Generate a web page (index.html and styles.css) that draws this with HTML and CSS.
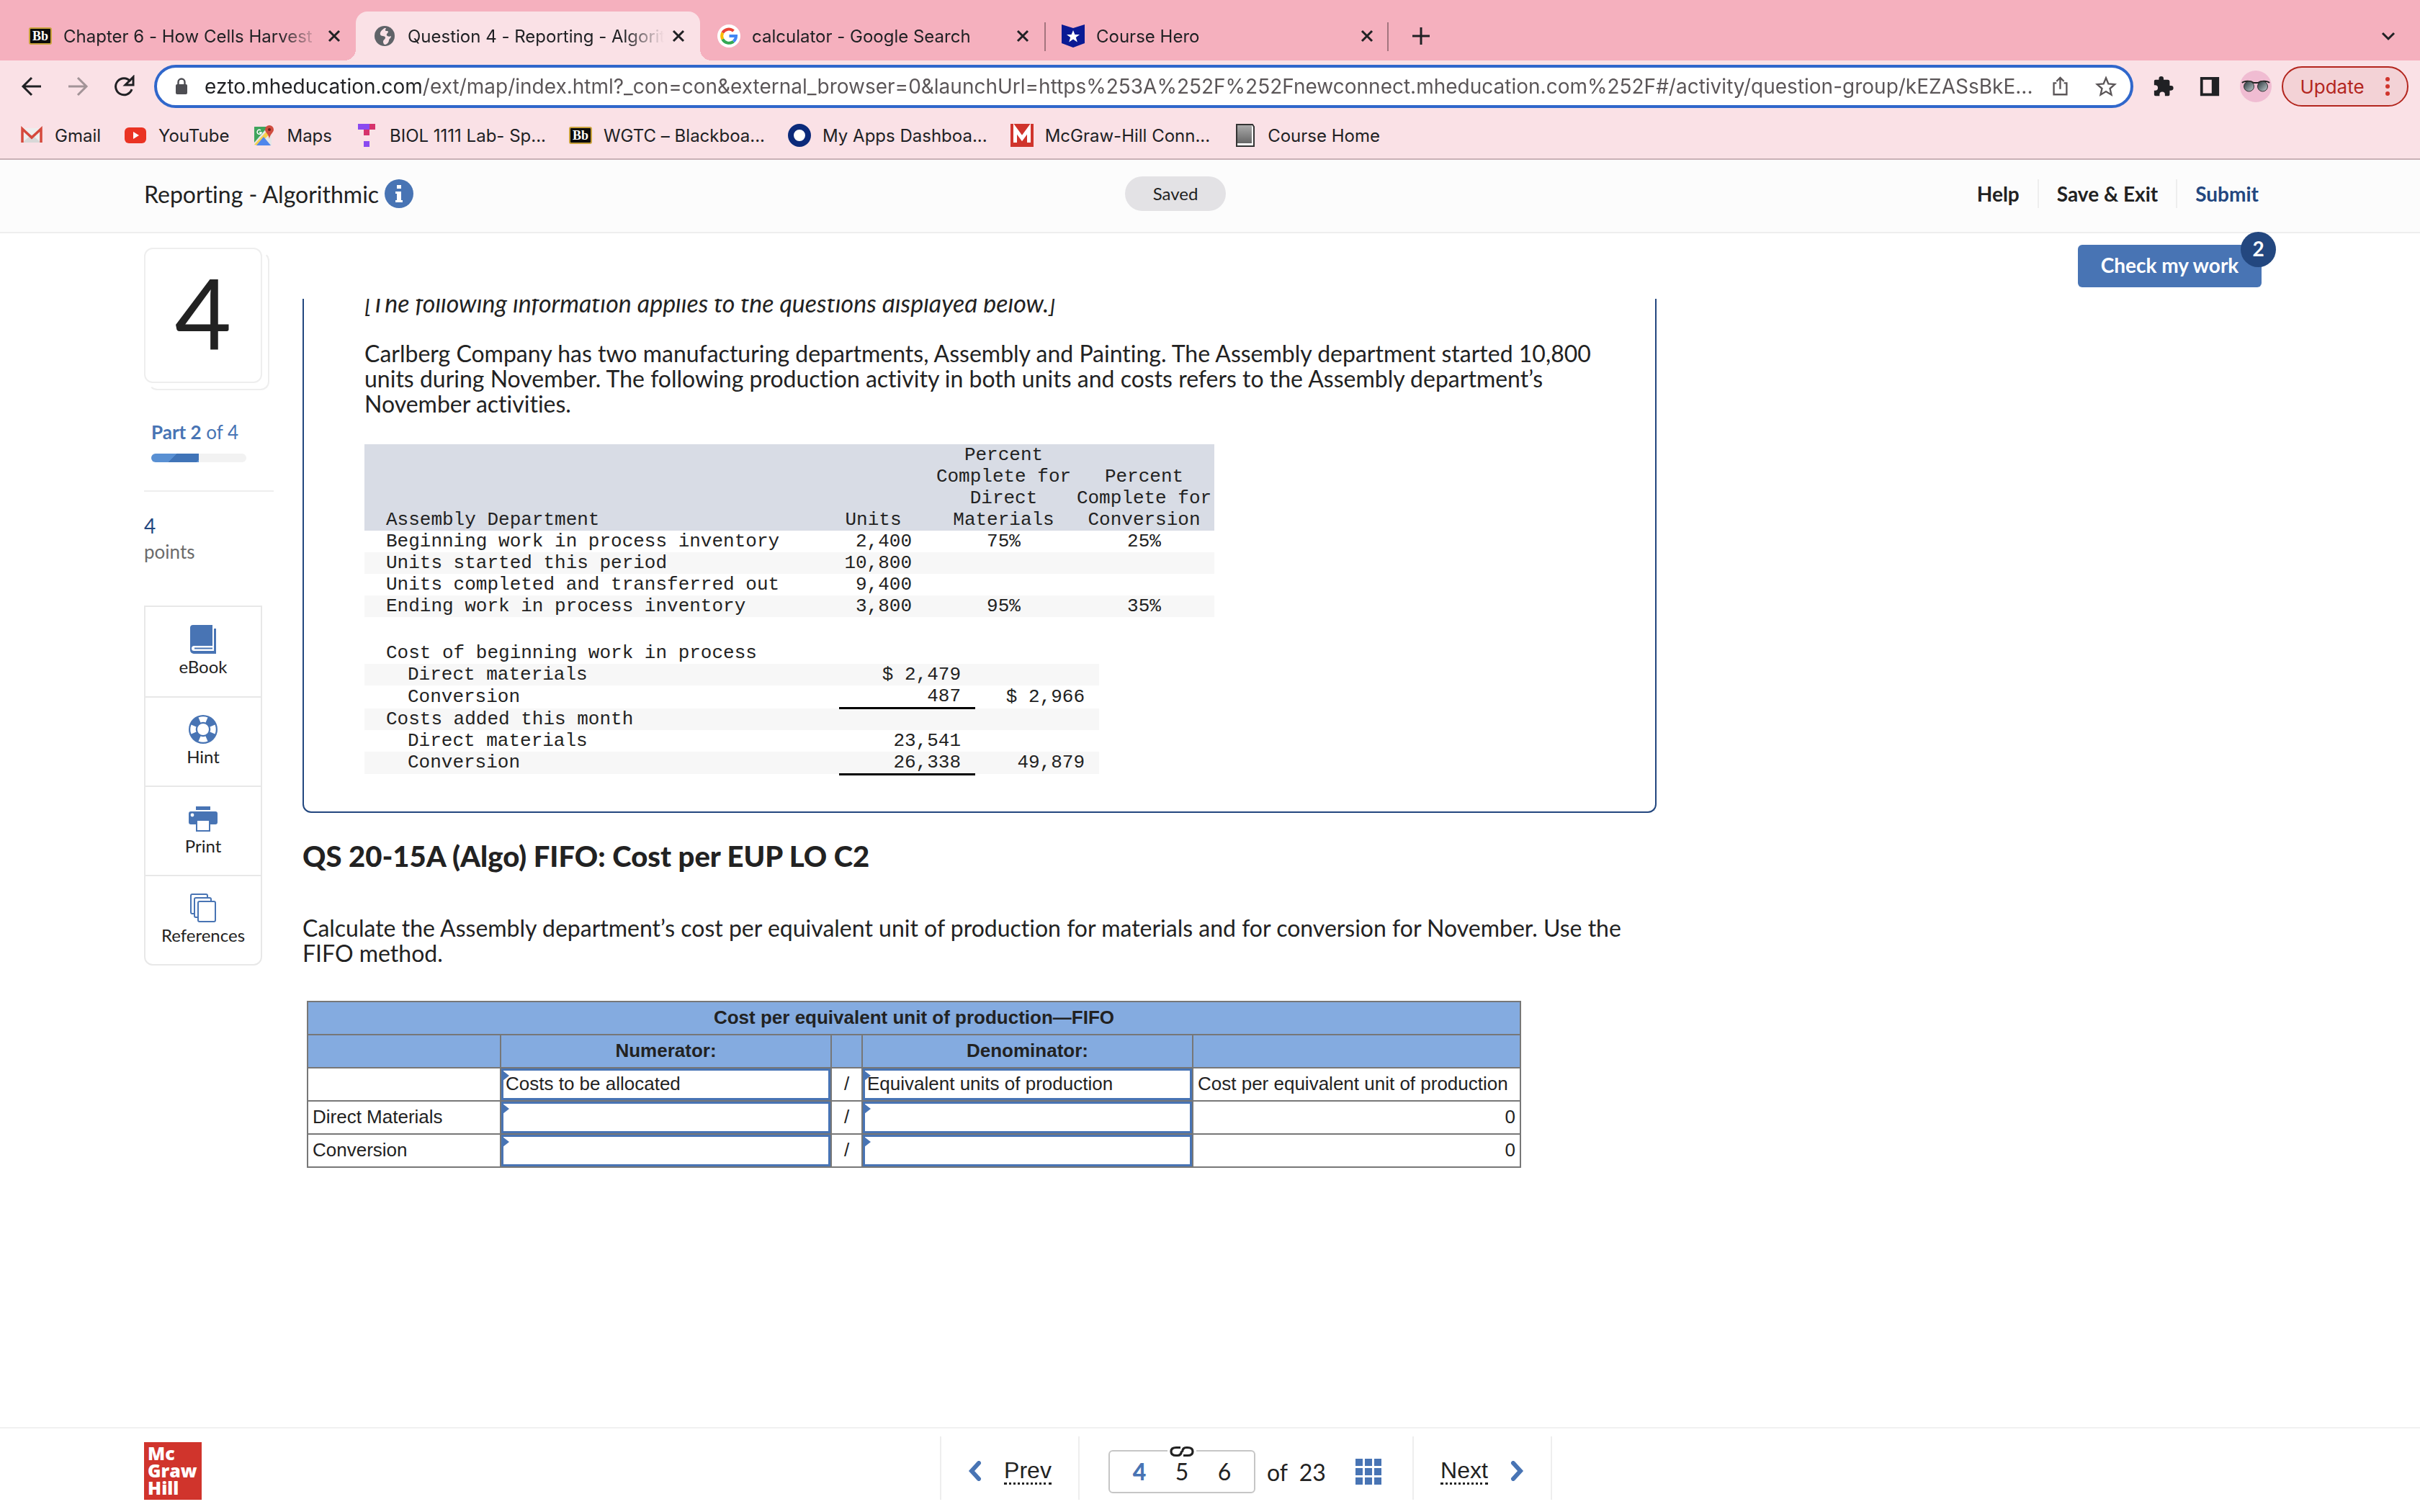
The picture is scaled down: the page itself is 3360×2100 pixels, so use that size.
FILE: index.html
```html
<!DOCTYPE html>
<html lang="en">

<head>
	<meta charset="utf-8">
	<title>Question 4 - Reporting - Algorithmic - Connect</title>
	<link rel="stylesheet" href="styles.css">
</head>

<body>
	<div class="browser">
		<div class="tabs">
			<div class="tab">
				<svg class="fav" viewBox="0 0 32 32"><rect x="1" y="5" width="30" height="22" rx="2" fill="#0b0b0b" stroke="#c9a23c" stroke-width="2"/><text x="16" y="22" class="bb">Bb</text></svg>
				<span class="tab-title">Chapter 6 - How Cells Harvest</span>
				<button class="close" aria-label="Close tab"><svg viewBox="0 0 20 20"><path d="M3 3l14 14M17 3L3 17"/></svg></button>
			</div>
			<div class="tab active">
				<svg class="fav" viewBox="0 0 32 32"><circle cx="16" cy="16" r="14" fill="#5f6368"/><path d="M16 5c-3 2-7 5-6 9 1 3 6 1 7 4 0 3-3 3-3 6 0 2 1 4 3 4 3-1 5-4 5-6s3-3 3-6c-2 1-5 1-6-1s2-3 2-5-4 0-4-2 1-2 1-3z" fill="#fae1e6"/><path d="M20 5c1 3 3 4 5 7" stroke="#5f6368" stroke-width="3" fill="none"/></svg>
				<span class="tab-title">Question 4 - Reporting - Algorit</span>
				<button class="close" aria-label="Close tab"><svg viewBox="0 0 20 20"><path d="M3 3l14 14M17 3L3 17"/></svg></button>
			</div>
			<div class="tab">
				<svg class="fav" viewBox="0 0 32 32"><circle cx="16" cy="16" r="16" fill="#fff"/><g fill="none" stroke-width="4"><path d="M22.500 9A10 10 0 0 0 7.300 11.500" stroke="#ea4335"/><path d="M7.300 11.500A10 10 0 0 0 7.300 20.500" stroke="#fbbc05"/><path d="M7.300 20.500A10 10 0 0 0 22.400 23.600" stroke="#34a853"/><path d="M22.400 23.600A10 10 0 0 0 26 16H16.500" stroke="#4285f4"/></g></svg>
				<span class="tab-title">calculator - Google Search</span>
				<button class="close" aria-label="Close tab"><svg viewBox="0 0 20 20"><path d="M3 3l14 14M17 3L3 17"/></svg></button>
			</div>
			<div class="tab line">
				<svg class="fav" viewBox="0 0 32 32"><path d="M0 0l16 5 16-5v26l-16 6-16-6z" fill="#0a1a94"/><path d="M16 8l2.400 6h6.600l-5.200 4 2 6.500-5.800-4-5.800 4 2-6.500-5.200-4h6.600z" fill="#fff"/></svg>
				<span class="tab-title">Course Hero</span>
				<button class="close" aria-label="Close tab"><svg viewBox="0 0 20 20"><path d="M3 3l14 14M17 3L3 17"/></svg></button>
			</div>
			<button class="new-tab" aria-label="New tab"><svg viewBox="0 0 24 24"><path d="M12 0v24M0 12h24"/></svg></button>
			<button class="tab-search" aria-label="Search tabs"><svg viewBox="0 0 20 20"><path d="M2 6l8 8 8-8"/></svg></button>
		</div>

		<div class="toolbar">
			<button class="nav-btn" aria-label="Back"><svg viewBox="0 0 32 32"><path d="M29 16H4M16 4L4 16l12 12"/></svg></button>
			<button class="nav-btn off" aria-label="Forward"><svg viewBox="0 0 32 32"><path d="M3 16h25M16 4l12 12-12 12"/></svg></button>
			<button class="nav-btn" aria-label="Reload"><svg viewBox="0 0 32 32"><path d="M27 20a11.500 11.500 0 1 1-2-11"/><path d="M29 3v11H18z" fill="#202124" stroke="none"/></svg></button>
			<div class="omnibox">
				<svg class="lock" viewBox="0 0 20 24"><rect x="2" y="9" width="16" height="14" rx="2" fill="#4d4d52"/><path d="M5.500 10V6a4.500 4.500 0 0 1 9 0v4" fill="none" stroke="#4d4d52" stroke-width="2.400"/></svg>
				<input class="url" type="text" aria-label="Address" value="ezto.mheducation.com/ext/map/index.html?_con=con&amp;external_browser=0&amp;launchUrl=https%253A%252F%252Fnewconnect.mheducation.com%252F#/activity/question-group/kEZASsBkE...">
				<button class="omni-btn" aria-label="Share"><svg viewBox="0 0 32 32"><path d="M11 11H7v17h19V11h-4M16.500 20V3M11 8.500L16.500 3 22 8.500"/></svg></button>
				<button class="omni-btn" aria-label="Bookmark"><svg viewBox="0 0 32 32"><path d="M16 3.500l3.600 8.700 9.400.8-7.100 6.200 2.100 9.200-8-4.900-8 4.900 2.100-9.200L3 13l9.400-.8z"/></svg></button>
			</div>
			<button class="ext-btn" aria-label="Extensions"><svg viewBox="0 0 32 32"><path d="M27 15h-2V9a3 3 0 0 0-3-3h-6V4.500a3.500 3.500 0 0 0-7 0V6H4a2 2 0 0 0-2 2v6h1.500a4 4 0 0 1 0 8H2v6a2 2 0 0 0 2 2h6v-2a4 4 0 0 1 8 0v2h5a2 2 0 0 0 2-2v-6h2a3.500 3.500 0 0 0 0-7z" fill="#202124"/></svg></button>
			<button class="ext-btn" aria-label="Side panel"><svg viewBox="0 0 32 32"><path d="M2 2h28v28H2zM6 6v20h13V6z" fill="#202124" fill-rule="evenodd"/></svg></button>
			<button class="avatar" aria-label="Profile"><svg viewBox="0 0 44 44"><defs><linearGradient id="lens" x2="1" y2="1"><stop offset="0" stop-color="#263238"/><stop offset="1" stop-color="#c4cfd2"/></linearGradient></defs><circle cx="22" cy="22" r="22" fill="#f0bcd2"/><path d="M3 17c3-3 12-3 16 0h6c4-3 13-3 16 0" fill="none" stroke="#222" stroke-width="2"/><circle cx="12.500" cy="22" r="7" fill="url(#lens)" stroke="#333"/><circle cx="31.500" cy="22" r="7" fill="url(#lens)" stroke="#333"/></svg></button>
			<button class="update">Update<svg viewBox="0 0 8 28"><circle cx="4" cy="4" r="3"/><circle cx="4" cy="14" r="3"/><circle cx="4" cy="24" r="3"/></svg></button>
		</div>

		<nav class="bookmarks">
			<a href="#"><svg viewBox="0 0 32 32"><path d="M3 6h26v20H3z" fill="#eee"/><path d="M3 26l13-11 13 11z" fill="#d8d8d8"/><path d="M3 26V7l13 12L29 7v19" fill="none" stroke="#d5493c" stroke-width="3.500"/></svg>Gmail</a>
			<a href="#"><svg viewBox="0 0 32 32"><rect x="1" y="5" width="30" height="22" rx="6" fill="#ea3323"/><path d="M13 11l8 5-8 5z" fill="#fff"/></svg>YouTube</a>
			<a href="#"><svg viewBox="0 0 32 32"><path d="M3 4h24v26H3z" fill="#e6e6e6"/><path d="M3 4h19L3 26z" fill="#3fa45c"/><path d="M3 29L24 6l4 5L8 30z" fill="#f7cf4d"/><path d="M6 30l10-12 10 12z" fill="#4f86ec"/><path d="M24 2a6 6 0 0 0-6 6c0 4 5 6 6 13 1-7 6-9 6-13a6 6 0 0 0-6-6z" fill="#d04c3f"/><circle cx="24" cy="8" r="2" fill="#6f1f19"/><path d="M12 9a3 3 0 1 0 1 3h-3" fill="none" stroke="#fff" stroke-width="1.500"/></svg>Maps</a>
			<a href="#"><svg viewBox="0 0 32 32"><path d="M4 0h17v8H4zM12 24h8v8h-8z" fill="#8a4af0"/><path d="M20 0h8v8h-8zM12 8h8v8h-8z" fill="#d6336c"/></svg>BIOL 1111 Lab- Sp...</a>
			<a href="#"><svg viewBox="0 0 32 32"><rect x="1" y="5" width="30" height="22" rx="2" fill="#0b0b0b" stroke="#c9a23c" stroke-width="2"/><text x="16" y="22" class="bb">Bb</text></svg>WGTC – Blackboa...</a>
			<a href="#"><svg viewBox="0 0 32 32"><circle cx="16" cy="16" r="12" fill="#fff" stroke="#0b2a7a" stroke-width="8"/></svg>My Apps Dashboa...</a>
			<a href="#"><svg viewBox="0 0 32 32"><path d="M0 0h32v32H0z" fill="#d0342c"/><path d="M6.500 26V7l9.500 13 9.500-13v19" fill="none" stroke="#fff" stroke-width="5"/></svg>McGraw-Hill Conn...</a>
			<a href="#"><svg viewBox="0 0 32 32"><defs><linearGradient id="page" x2="0" y2="1"><stop offset="0" stop-color="#aaa"/><stop offset="1" stop-color="#666"/></linearGradient></defs><path d="M5 1h22l2 3v27H5z" fill="#fff" stroke="#333" stroke-width="2"/><path d="M6 2h20v25H6z" fill="url(#page)"/></svg>Course Home</a>
		</nav>
	</div>

	<header class="header">
		<div class="title">Reporting - Algorithmic
			<button class="info" aria-label="Information"><svg viewBox="0 0 40 40"><circle cx="20" cy="20" r="20" fill="#4874b4"/><path d="M17 8h6v5h-6zM15 17h8v12h2v3H15v-3h2v-9h-2z" fill="#fff"/></svg></button>
		</div>
		<span class="saved">Saved</span>
		<div class="actions">
			<a href="#">Help</a>
			<a href="#">Save &amp; Exit</a>
			<a href="#" class="submit">Submit</a>
		</div>
	</header>

	<main class="main">
		<aside class="side">
			<div class="number">4</div>
			<div class="part"><b>Part 2</b> of 4
				<div class="bar"><div class="bar-fill"></div></div>
			</div>
			<div class="points"><span>4</span>points</div>
			<div class="tools">
				<button><svg viewBox="0 0 40 40"><path d="M6 0h27v29H7.500a3.500 3.500 0 0 0 0 7H35V5h3v35H7a5 5 0 0 1-5-5V4a4 4 0 0 1 4-4z"/><path d="M8 31.500h25v2H8z"/></svg>eBook</button>
				<button><svg viewBox="0 0 40 40"><path d="M20 0a20 20 0 1 0 0 40 20 20 0 1 0 0-40zm0 12a8 8 0 1 1 0 16 8 8 0 1 1 0-16z" fill-rule="evenodd"/><path d="M13.500 3.500q6.500-2.500 13 0l-3 7q-3.500-1.500-7 0zM13.500 36.500q6.500 2.500 13 0l-3-7q-3.500 1.500-7 0zM3.500 13.500q-2.500 6.500 0 13l7-3q-1.500-3.500 0-7zM36.500 13.500q2.500 6.500 0 13l-7-3q1.500-3.500 0-7z" fill="#fff"/></svg>Hint</button>
				<button><svg viewBox="0 0 40 40"><path d="M10 3h20v5H10zM3 10h34a3 3 0 0 1 3 3v12a3 3 0 0 1-3 3h-7v10H10V28H3a3 3 0 0 1-3-3V13a3 3 0 0 1 3-3z"/><path d="M12 23h16v13H12z" fill="#fff"/><circle cx="5" cy="15" r="2.400" fill="#fff"/></svg>Print</button>
				<button><svg viewBox="0 0 40 40"><g fill="#fff" stroke="#4874b4" stroke-width="2"><rect x="3" y="1" width="23" height="27" rx="2"/><rect x="8" y="6" width="23" height="27" rx="2"/><rect x="13" y="11" width="24" height="28" rx="2"/></g></svg>References</button>
			</div>
		</aside>

		<section class="content">
			<div class="passage">
				<p class="note">[The following information applies to the questions displayed below.]</p>
				<p>Carlberg Company has two manufacturing departments, Assembly and Painting. The Assembly department started 10,800 units during November. The following production activity in both units and costs refers to the Assembly department’s November activities.</p>
				<table class="data units">
					<tr>
						<th>Assembly Department</th>
						<th>Units</th>
						<th>Percent<br>Complete for<br>Direct<br>Materials</th>
						<th>Percent<br>Complete for<br>Conversion</th>
					</tr>
					<tr><td>Beginning work in process inventory</td><td>2,400</td><td>75%</td><td>25%</td></tr>
					<tr><td>Units started this period</td><td>10,800</td><td></td><td></td></tr>
					<tr><td>Units completed and transferred out</td><td>9,400</td><td></td><td></td></tr>
					<tr><td>Ending work in process inventory</td><td>3,800</td><td>95%</td><td>35%</td></tr>
				</table>
				<table class="data costs">
					<tr><td>Cost of beginning work in process</td><td></td><td></td></tr>
					<tr><td class="indent">Direct materials</td><td>$ 2,479</td><td></td></tr>
					<tr><td class="indent">Conversion</td><td class="sum">487</td><td>$ 2,966</td></tr>
					<tr><td>Costs added this month</td><td></td><td></td></tr>
					<tr><td class="indent">Direct materials</td><td>23,541</td><td></td></tr>
					<tr><td class="indent">Conversion</td><td class="sum">26,338</td><td>49,879</td></tr>
				</table>
			</div>

			<h1>QS 20-15A (Algo) FIFO: Cost per EUP LO C2</h1>
			<p class="task">Calculate the Assembly department’s cost per equivalent unit of production for materials and for conversion for November. Use the FIFO method.</p>

			<table class="answer">
				<colgroup><col class="c-label"><col class="c-input"><col class="c-slash"><col class="c-input"><col class="c-result"></colgroup>
				<tr><th colspan="5">Cost per equivalent unit of production—FIFO</th></tr>
				<tr><th></th><th>Numerator:</th><th></th><th>Denominator:</th><th></th></tr>
				<tr>
					<td></td>
					<td class="field"><input type="text" aria-label="Numerator" value="Costs to be allocated"></td>
					<td class="slash">/</td>
					<td class="field"><input type="text" aria-label="Denominator" value="Equivalent units of production"></td>
					<td>Cost per equivalent unit of production</td>
				</tr>
				<tr>
					<td>Direct Materials</td>
					<td class="field"><input type="text" aria-label="Direct materials numerator"></td>
					<td class="slash">/</td>
					<td class="field"><input type="text" aria-label="Direct materials denominator"></td>
					<td class="result">0</td>
				</tr>
				<tr>
					<td>Conversion</td>
					<td class="field"><input type="text" aria-label="Conversion numerator"></td>
					<td class="slash">/</td>
					<td class="field"><input type="text" aria-label="Conversion denominator"></td>
					<td class="result">0</td>
				</tr>
			</table>
		</section>

		<button class="check">Check my work<span class="badge">2</span></button>
	</main>

	<footer class="footer">
		<div class="logo">Mc<br>Graw<br>Hill</div>
		<nav class="pager">
			<a href="#" class="step"><svg viewBox="0 0 20 28"><path d="M15 3L5 14l10 11"/></svg><span>Prev</span></a>
			<div class="pages">
				<div class="group">
					<svg class="chain" viewBox="0 0 40 18"><path d="M0 0h40v18H0z" fill="#fff"/><path d="M18 3.500h-6q-7 0-7 5.500t7 5.500h2q5 0 5.500-6M22 14.500h6q7 0 7-5.500t-7-5.500h-2q-5 0-5.500 6" fill="none" stroke="#222" stroke-width="3.200"/></svg>
					<a href="#" class="current">4</a><a href="#">5</a><a href="#">6</a>
				</div>
				<span class="total">of&nbsp; 23</span>
				<button class="grid" aria-label="Question list"><svg viewBox="0 0 36 36"><path d="M0 0h10v10H0zM13 0h10v10H13zM26 0h10v10H26zM0 13h10v10H0zM13 13h10v10H13zM26 13h10v10H26zM0 26h10v10H0zM13 26h10v10H13zM26 26h10v10H26z" fill="#4874b4"/></svg></button>
			</div>
			<a href="#" class="step"><span>Next</span><svg viewBox="0 0 20 28"><path d="M5 3l10 11L5 25"/></svg></a>
		</nav>
	</footer>
</body>

</html>
```
FILE: styles.css
```css
:root {
	--tabstrip: #f5b0be;
	--toolbar: #fae1e6;
	--blue: #4874b4;
	--navy: #23477f;
	--text: #222;
	--line: #eee;
}

* {
	box-sizing: border-box;
}

body {
	margin: 0;
	min-height: 100vh;
	display: flex;
	flex-direction: column;
	background: #fff;
	color: var(--text);
	font-family: Lato, sans-serif;
	font-size: 32px;
	font-variant-ligatures: none;
}

a {
	color: inherit;
	text-decoration: none;
}

button {
	display: flex;
	align-items: center;
	justify-content: center;
	padding: 0;
	border: none;
	background: none;
	color: inherit;
	font: inherit;
	cursor: pointer;
}

svg {
	display: block;
	flex: none;
}

/* browser window */

.browser {
	background: var(--toolbar);
	border-bottom: 2px solid #c9b0b6;
	color: #202124;
	font-family: Inter, sans-serif;
	font-size: 24px;
}

.tabs {
	display: flex;
	height: 84px;
	padding: 16px 28px 0 16px;
	background: var(--tabstrip);
}

.tab {
	position: relative;
	display: flex;
	align-items: center;
	width: 478px;
	padding: 0 20px 0 24px;
}

.active {
	background: var(--toolbar);
	border-radius: 16px 16px 0 0;
}

.active::before,
.active::after {
	content: "";
	position: absolute;
	bottom: 0;
	width: 16px;
	height: 16px;
}

.active::before {
	left: -16px;
	background: radial-gradient(circle at 0 0, transparent 16px, var(--toolbar) 16px);
}

.active::after {
	right: -16px;
	background: radial-gradient(circle at 100% 0, transparent 16px, var(--toolbar) 16px);
}

.line::before,
.line::after {
	content: "";
	position: absolute;
	top: 15px;
	left: 0;
	width: 2px;
	height: 40px;
	background: #a3747e;
}

.line::after {
	left: auto;
	right: 0;
}

.fav {
	width: 32px;
	height: 32px;
}

.bb {
	font: bold 18px "Liberation Serif", serif;
	fill: #fff;
	text-anchor: middle;
}

.tab-title {
	flex: 1;
	margin: 0 10px 0 16px;
	overflow: hidden;
	white-space: nowrap;
	-webkit-mask-image: linear-gradient(to left, transparent, #000 56px);
	mask-image: linear-gradient(to left, transparent, #000 56px);
}

.close svg,
.tab-search svg {
	width: 20px;
	height: 20px;
}

.close path,
.new-tab path,
.tab-search path {
	fill: none;
	stroke: #202124;
	stroke-width: 3;
}

.new-tab {
	width: 90px;
}

.new-tab svg {
	width: 24px;
	height: 24px;
}

.tab-search {
	width: 32px;
	margin-left: auto;
}

.toolbar {
	display: flex;
	align-items: center;
	height: 72px;
	padding: 0 16px 0 12px;
}

.nav-btn {
	width: 64px;
}

.nav-btn svg {
	width: 32px;
	height: 32px;
}

.nav-btn path {
	fill: none;
	stroke: #202124;
	stroke-width: 3;
}

.off {
	opacity: 0.4;
}

.omnibox {
	flex: 1;
	display: flex;
	align-items: center;
	height: 60px;
	margin: 0 10px;
	padding: 0 2px 0 24px;
	background: #fff;
	border: 4px solid #3067cb;
	border-radius: 30px;
}

.lock {
	width: 20px;
	height: 24px;
}

.url {
	flex: 1;
	margin-left: 22px;
	padding: 0;
	border: none;
	outline: none;
	background: linear-gradient(to right, #202124 304px, #5a5557 304px);
	-webkit-background-clip: text;
	background-clip: text;
	-webkit-text-fill-color: transparent;
	color: #5a5557;
	font: 28px Inter, sans-serif;
}

.omni-btn {
	width: 64px;
}

.omni-btn svg,
.ext-btn svg {
	width: 30px;
	height: 30px;
}

.omni-btn path {
	fill: none;
	stroke: #5a5557;
	stroke-width: 2.5;
}

.ext-btn {
	width: 64px;
}

.avatar {
	width: 64px;
}

.avatar svg {
	width: 44px;
	height: 44px;
}

.update {
	width: 176px;
	height: 56px;
	margin-left: 4px;
	gap: 28px;
	border: 2px solid #b3261e;
	border-radius: 28px;
	background: #f3d2d6;
	color: #b3261e;
	font-size: 26px;
}

.update svg {
	width: 8px;
	height: 28px;
	fill: #d0342c;
}

.bookmarks {
	display: flex;
	align-items: center;
	gap: 32px;
	height: 64px;
	padding-left: 28px;
}

.bookmarks a {
	display: flex;
	align-items: center;
	gap: 16px;
}

.bookmarks svg {
	width: 32px;
	height: 32px;
}

/* assignment header */

.header {
	display: flex;
	align-items: center;
	height: 102px;
	padding: 0 224px 6px 200px;
	background: #fcfcfc;
	border-bottom: 2px solid var(--line);
}

.title {
	flex: 1;
	display: flex;
	align-items: center;
	gap: 8px;
}

.info svg {
	width: 40px;
	height: 40px;
}

.saved {
	width: 140px;
	margin-right: 72px;
	border-radius: 24px;
	background: #e3e2e5;
	font-size: 24px;
	line-height: 48px;
	text-align: center;
}

.actions {
	flex: 1;
	display: flex;
	justify-content: flex-end;
	font-size: 28px;
	font-weight: bold;
	line-height: 40px;
}

.actions a + a {
	margin-left: 25px;
	padding-left: 25px;
	border-left: 2px solid var(--line);
}

.submit {
	color: var(--navy);
}

/* question area */

.main {
	flex: 1;
	display: flex;
	align-items: flex-start;
	padding: 16px 220px 0 200px;
}

.side {
	width: 180px;
	margin: 4px 40px 0 0;
}

.number {
	position: relative;
	width: 164px;
	height: 188px;
	border: 2px solid var(--line);
	border-radius: 12px;
	background: #fff;
	font-size: 136px;
	line-height: 176px;
	text-align: center;
}

.number::after {
	content: "";
	position: absolute;
	inset: 4px -12px -12px 4px;
	border: 2px solid var(--line);
	border-left-color: transparent;
	border-top-color: transparent;
	border-radius: 12px;
}

.part {
	margin-top: 50px;
	padding: 0 38px 39px 10px;
	border-bottom: 2px solid var(--line);
	color: var(--blue);
	font-size: 26px;
	line-height: 36px;
}

.bar {
	height: 12px;
	margin-top: 12px;
	border-radius: 6px;
	background: #f2f2f2;
	overflow: hidden;
}

.bar-fill {
	width: 50%;
	height: 12px;
	background: linear-gradient(135deg, #5990d3 46%, #4074b8 46%, #4074b8 96%, #5990d3 96%);
}

.points {
	margin: 29px 0 57px;
	color: #6b6b6b;
	font-size: 26px;
	line-height: 36px;
}

.points span {
	display: block;
	color: var(--navy);
	font-size: 28px;
}

.tools {
	width: 164px;
	border: 2px solid #e8e8e8;
	border-radius: 0 0 12px 12px;
}

.tools button {
	flex-direction: column;
	gap: 3px;
	width: 100%;
	height: 124px;
	padding-bottom: 2px;
	font-size: 24px;
	line-height: 30px;
}

.tools button + button {
	border-top: 2px solid #e8e8e8;
}

.tools svg {
	width: 40px;
	height: 40px;
	fill: var(--blue);
}

.content {
	flex: 1;
	max-width: 1880px;
	margin-top: 75px;
	overflow: hidden;
	line-height: 35px;
}

.passage {
	margin-top: -12px;
	padding: 0 84px 50px;
	border: 2px solid var(--navy);
	border-top: none;
	border-radius: 0 0 12px 12px;
}

.passage p {
	margin: 0 0 35px;
}

.passage .note {
	font-size: 34px;
	font-style: italic;
}

.data {
	border-collapse: collapse;
	table-layout: fixed;
	font: 26px/30px "Liberation Mono", monospace;
}

.data th,
.data td {
	height: 30px;
	padding: 0;
	font-weight: normal;
	text-align: center;
}

.data th {
	background: #d8dce5;
	vertical-align: bottom;
}

.data th:first-child,
.data td:first-child {
	padding-left: 30px;
	text-align: left;
}

.units {
	width: 1180px;
	margin: 39px 0 35px;
}

.units th:first-child {
	width: 623px;
}

.units th:nth-child(2) {
	width: 167px;
}

.units td:nth-child(2) {
	padding-right: 30px;
	text-align: right;
}

.units tr:nth-child(odd) td,
.costs tr:nth-child(even) td {
	background: #f7f7f7;
}

.costs {
	width: 1020px;
}

.costs td {
	padding-right: 20px;
	text-align: right;
}

.costs td:first-child {
	width: 659px;
}

.costs td:nth-child(2) {
	width: 189px;
}

.costs .indent:first-child {
	padding-left: 60px;
}

.costs .sum {
	border-bottom: 3px solid #000;
}

h1 {
	margin: 36px 0 0;
	font-size: 40px;
	font-weight: 900;
	line-height: 48px;
}

.task {
	margin: 58px 0 49px;
}

.answer {
	width: 1686px;
	margin-left: 6px;
	border-collapse: collapse;
	table-layout: fixed;
	font: 26px "Liberation Sans", sans-serif;
}

.answer th,
.answer td {
	height: 46px;
	padding: 0 6px;
	border: 2px solid #777;
}

.answer th {
	background: #84abe0;
}

.c-label {
	width: 268px;
}

.c-input {
	width: 459px;
}

.c-slash {
	width: 43px;
}

.answer .slash {
	text-align: center;
}

.answer .result {
	text-align: right;
}

.answer .field {
	position: relative;
	padding: 0;
}

.field::before {
	content: "";
	position: absolute;
	top: 3px;
	left: 2px;
	border: 7px solid transparent;
	border-left: 9px solid var(--blue);
	border-right: none;
}

.field input {
	display: block;
	width: 100%;
	height: 44px;
	padding: 0 3px;
	border: 3px solid var(--blue);
	background: #fff;
	color: inherit;
	font: inherit;
}

.check {
	position: relative;
	width: 255px;
	height: 59px;
	margin-left: auto;
	padding-bottom: 3px;
	border-radius: 6px;
	background: var(--blue);
	color: #fff;
	font-size: 28px;
	font-weight: bold;
}

.badge {
	position: absolute;
	top: -18px;
	right: -20px;
	width: 49px;
	height: 49px;
	border-radius: 50%;
	background: var(--navy);
	line-height: 46px;
	text-align: center;
}

/* footer */

.footer {
	display: flex;
	align-items: center;
	height: 118px;
	padding: 2px 180px 0 200px;
	border-top: 2px solid #f1f1f1;
}

.logo {
	width: 80px;
	height: 80px;
	padding: 3px 5px;
	background: #d0342c;
	color: #fff;
	font: 800 25px/24px "Open Sans", sans-serif;
}

.pager {
	flex: 1;
	display: flex;
	justify-content: center;
	height: 88px;
	margin-bottom: 8px;
}

.step {
	display: flex;
	align-items: center;
	justify-content: center;
	gap: 30px;
	width: 194px;
	padding-top: 8px;
	border-left: 2px solid var(--line);
	border-right: 2px solid var(--line);
	font: 32px "Liberation Sans", sans-serif;
}

.step span {
	line-height: 34px;
	border-bottom: 3px dotted #222;
}

.step svg {
	width: 20px;
	height: 28px;
	fill: none;
	stroke: var(--blue);
	stroke-width: 6;
	stroke-linecap: round;
}

.pages {
	display: flex;
	align-items: center;
	width: 462px;
	padding: 10px 43px 0 40px;
}

.group {
	position: relative;
	display: flex;
	align-items: center;
	justify-content: center;
	width: 204px;
	height: 60px;
	border: 2px solid #c6c6c6;
	border-radius: 6px;
}

.group a {
	width: 59px;
	line-height: 54px;
	text-align: center;
}

.chain {
	position: absolute;
	top: -9px;
	left: 80px;
	width: 40px;
	height: 18px;
}

.group .current {
	color: var(--blue);
	font-weight: 900;
}

.total {
	margin: 0 auto 0 16px;
}

.grid svg {
	width: 36px;
	height: 36px;
}
```
